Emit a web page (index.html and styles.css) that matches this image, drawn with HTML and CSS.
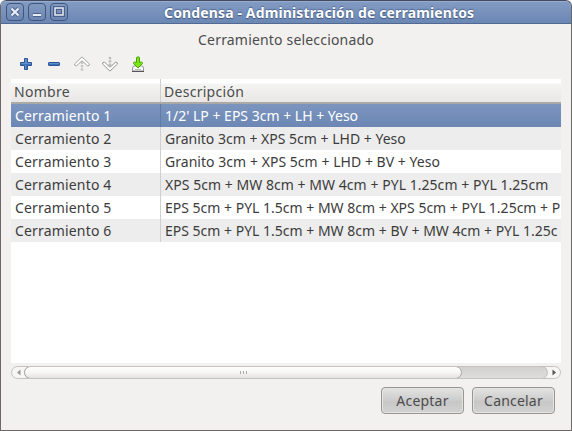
FILE: index.html
```html
<!DOCTYPE html>
<html lang="es">
<head>
<meta charset="utf-8">
<title>Condensa - Administración de cerramientos</title>
<link rel="stylesheet" href="styles.css">
</head>
<body>
<div class="window">
  <header class="titlebar">
    <div class="controls">
      <span class="control"><svg viewBox="0 0 18 18"><path class="halo" d="M5.500 5.500l7 7m0-7l-7 7"/><path class="mark" d="M5.500 5.500l7 7m0-7l-7 7"/></svg></span>
      <span class="control"><svg viewBox="0 0 18 18"><path class="halo" d="M5 12h8"/><path class="mark" d="M5 12h8"/></svg></span>
      <span class="control"><svg viewBox="0 0 18 18"><path class="halo" d="M5 5h8v7H5z"/><path class="mark thin" d="M5 5h8v7H5z"/></svg></span>
    </div>
    <h1 class="title">Condensa - Administración de cerramientos</h1>
  </header>
  <main class="content">
    <p class="heading">Cerramiento seleccionado</p>
    <div class="toolbar">
      <svg viewBox="0 0 16 16"><path d="M6.500 2.500h3v4h4v3h-4v4h-3v-4h-4v-3h4z" fill="#5f8fcc" stroke="#2c5596"/><path d="M3 8.500h10M8.500 9v4" stroke="#3f70bb"/></svg>
      <svg viewBox="0 0 16 16"><rect x="2.500" y="6.500" width="11" height="3" rx=".5" fill="#5f8fcc" stroke="#2c5596"/><path d="M3 8.500h10" stroke="#3f70bb"/></svg>
      <svg viewBox="0 0 16 16"><path d="M8 .9L15.400 8q.2 2.100-1.900 1.800L8 4.700 2.500 9.800Q.4 10.100.6 8z" fill="#fff" stroke="#999" stroke-width=".9"/><g fill="#fff" stroke="#aaa" stroke-width=".8"><circle cx="8" cy="6.900" r=".9"/><circle cx="8" cy="10.200" r=".9"/><circle cx="8" cy="13.500" r=".9"/></g></svg>
      <svg viewBox="0 0 16 16"><path d="M8 15.100L15.400 8q.2-2.100-1.900-1.800L8 11.300 2.500 6.200Q.4 5.900.6 8z" fill="#fff" stroke="#888" stroke-width=".9"/><g fill="#fff" stroke="#999" stroke-width=".8"><circle cx="8" cy="2.100" r=".9"/><circle cx="8" cy="5.400" r=".9"/><circle cx="8" cy="8.700" r=".9"/></g></svg>
      <svg viewBox="0 0 16 16"><path d="M3.500 10h9l1 2v3h-11v-3z" fill="#fafafa" stroke="#999"/><path d="M2 15.500h12" stroke="#555"/><path d="M5 13.500h6" stroke="#bbb"/><path d="M6.500 1.500q1.500-1.500 3 0v5l2-.5q1.500.5 1 1.500L8 12 3.500 7.500q-.5-1 1-1.500l2 .5z" fill="#7ae51b" stroke="#4ba606"/></svg>
    </div>
    <div class="list">
      <div class="row head"><span class="cell">Nombre</span><span class="cell">Descripción</span></div>
      <div class="row selected"><span class="cell">Cerramiento 1</span><span class="cell">1/2' LP + EPS 3cm + LH + Yeso</span></div>
      <div class="row"><span class="cell">Cerramiento 2</span><span class="cell">Granito 3cm + XPS 5cm + LHD + Yeso</span></div>
      <div class="row"><span class="cell">Cerramiento 3</span><span class="cell wide">Granito 3cm + XPS 5cm + LHD + BV + Yeso</span></div>
      <div class="row"><span class="cell">Cerramiento 4</span><span class="cell wide">XPS 5cm + MW 8cm + MW 4cm + PYL 1.25cm + PYL 1.25cm</span></div>
      <div class="row"><span class="cell">Cerramiento 5</span><span class="cell">EPS 5cm + PYL 1.5cm + MW 8cm + XPS 5cm + PYL 1.25cm + P</span></div>
      <div class="row"><span class="cell">Cerramiento 6</span><span class="cell">EPS 5cm + PYL 1.5cm + MW 8cm + BV + MW 4cm + PYL 1.25c</span></div>
    </div>
    <div class="scrollbar">
      <svg class="arrow" viewBox="0 0 12 11"><path d="M8.500 2.500v6l-3.500-3z" fill="#999"/></svg>
      <div class="track"><div class="thumb"><i></i><i></i><i></i></div></div>
      <svg class="arrow" viewBox="0 0 12 11"><path d="M4.500 2.500v6l3.500-3z" fill="#555"/></svg>
    </div>
    <div class="actions">
      <button>Aceptar</button>
      <button>Cancelar</button>
    </div>
  </main>
</div>
</body>
</html>
```
FILE: styles.css
```css
* { box-sizing: border-box; }
body {
  margin: 0;
  background: #fff;
  font: 14px/23px "Noto Sans", "Open Sans", sans-serif;
  color: #3c3c3c;
}
.window {
  width: 572px;
  height: 431px;
  border: 1px solid #6d6868;
  border-top: 0;
  border-radius: 6px 6px 0 0;
  background: #f2f1f0;
  overflow: hidden;
}
.titlebar {
  display: flex;
  height: 24px;
  margin: 0 -1px;
  padding: 3px 0 0 6px;
  background: linear-gradient(#839cc4, #6b87b4);
  border: solid #454c60;
  border-width: 1px 1px 1px 0;
  border-bottom-color: #526a92;
  border-radius: 6px 6px 0 0;
  box-shadow: inset 0 1px #95abd0;
}
.controls { display: flex; gap: 4px; margin-top: -1px; }
.control {
  width: 18px;
  height: 18px;
  border: 1px solid #43567a;
  border-radius: 4px;
  background: linear-gradient(#819ac1, #6b86b2);
}
.control svg { display: block; width: 18px; height: 18px; margin: -1px; fill: none; }
.halo { stroke: #4b608a; stroke-width: 4; }
.mark { stroke: #e8edf4; stroke-width: 2.2; }
.mark.thin { stroke-width: 1.5; }
.title {
  margin: -1px 0 0 96px;
  font-size: 14px;
  line-height: 20px;
  font-weight: 700;
  letter-spacing: .14px;
  white-space: nowrap;
  color: #fff;
  text-shadow: 0 1px 1px #42577c, 0 -1px 1px #526a92;
}
.content { padding: 0 10px; }
.heading { margin: 0; padding-top: 4px; height: 32px; text-align: center; letter-spacing: .18px; color: #4c4c4c; }
.toolbar { display: flex; gap: 12px; height: 23px; padding-left: 7px; }
.toolbar svg { width: 16px; height: 16px; fill: none; }
.list { height: 284px; background: #fff; overflow: hidden; }
.row { display: grid; grid-template-columns: 150px 400px; height: 23px; }
.row:nth-child(odd):not(.head) { background: #ededed; }
.cell { padding-left: 4px; overflow: hidden; white-space: nowrap; }
.cell:first-child { border-right: 1px solid #cfcfcf; letter-spacing: .17px; }
.cell.wide { letter-spacing: .04px; }
.row.head { height: 25px; line-height: 26px; border-bottom: 2px solid #aaa9a6; color: #4c4c4c; background: linear-gradient(#fff 4px, #f4f4f3 5px, #e8e7e5); }
.row.head .cell { padding-left: 3px; letter-spacing: .28px; }
.row.selected:nth-child(n) { background: linear-gradient(#7b95bf, #6c87b3); color: #fff; }
.row.selected .cell:first-child { border-color: #637ba3; }
.scrollbar {
  display: flex;
  height: 13px;
  margin-top: 3px;
  border: 1px solid #c4c2be;
  border-radius: 7px;
  background: #f7f6f5;
  overflow: hidden;
}
.arrow { width: 12px; height: 11px; flex: none; }
.track { flex: 1; margin: -1px 0; border: 1px solid #c0beba; border-radius: 7px; background: linear-gradient(#d2d1cf, #dedddb); }
.thumb {
  display: flex;
  justify-content: center;
  align-items: center;
  gap: 2px;
  width: 438px;
  height: 13px;
  margin: -1px;
  border: 1px solid #aaa8a4;
  border-radius: 7px;
  background: linear-gradient(#fff, #f7f6f5 50%, #e3e2e0);
}
.thumb i { width: 1px; height: 3px; background: #aaa; }
.actions { display: flex; justify-content: flex-end; gap: 8px; margin-top: 8px; padding-right: 6px; }
button {
  width: 83px;
  height: 27px;
  padding: 0;
  border: 1px solid #989693;
  border-radius: 4px;
  background: linear-gradient(#e3e3e2, #cdcdcd 48%, #c7c7c7 55%, #d2d2d2);
  box-shadow: inset 0 0 0 1px #e4e4e3;
  font: inherit;
  letter-spacing: .2px;
  color: #4c4c4c;
}
```
